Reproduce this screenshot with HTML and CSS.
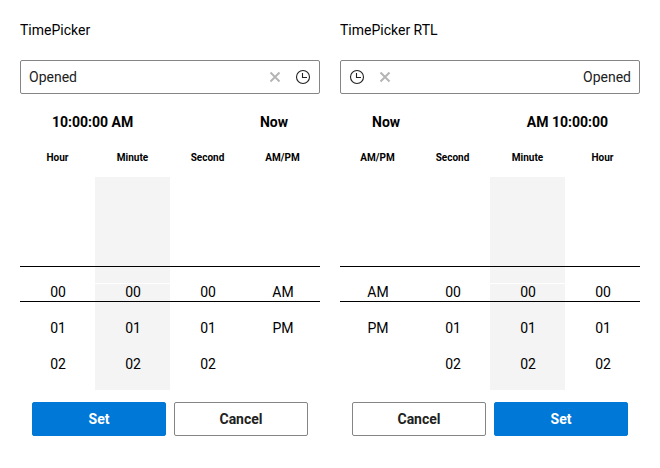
FILE: index.html
```html
<!DOCTYPE html>
<html lang="en">
<head>
<meta charset="utf-8">
<title>TimePicker</title>
<link rel="stylesheet" href="styles.css">
</head>
<body>
<main class="pickers">
  <section class="picker">
    <div class="title">TimePicker</div>
    <div class="field">
      <span class="value">Opened</span>
      <svg class="clear" viewBox="0 0 12 12"><path d="M1.5 1.5l9 9M10.5 1.5l-9 9"/></svg>
      <svg class="clock" viewBox="0 0 16 16"><circle cx="8" cy="8" r="6.5"/><path d="M7.5 4v4.5H12"/></svg>
    </div>
    <div class="summary"><span>10:00:00 AM</span><span>Now</span></div>
    <div class="labels"><span>Hour</span><span>Minute</span><span>Second</span><span>AM/PM</span></div>
    <div class="wheels">
      <div class="wheel"><span>00</span><span>01</span><span>02</span></div>
      <div class="wheel active"><span>00</span><span>01</span><span>02</span></div>
      <div class="wheel"><span>00</span><span>01</span><span>02</span></div>
      <div class="wheel"><span>AM</span><span>PM</span></div>
      <div class="selection"></div>
    </div>
    <div class="actions"><button class="btn primary">Set</button><button class="btn">Cancel</button></div>
  </section>
  <section class="picker">
    <div class="title">TimePicker RTL</div>
    <div dir="rtl">
      <div class="field">
        <span class="value">Opened</span>
        <svg class="clear" viewBox="0 0 12 12"><path d="M1.5 1.5l9 9M10.5 1.5l-9 9"/></svg>
        <svg class="clock" viewBox="0 0 16 16"><circle cx="8" cy="8" r="6.5"/><path d="M7.5 4v4.5H12"/></svg>
      </div>
      <div class="summary"><span>10:00:00 AM</span><span>Now</span></div>
      <div class="labels"><span>Hour</span><span>Minute</span><span>Second</span><span>AM/PM</span></div>
      <div class="wheels">
        <div class="wheel"><span>00</span><span>01</span><span>02</span></div>
        <div class="wheel active"><span>00</span><span>01</span><span>02</span></div>
        <div class="wheel"><span>00</span><span>01</span><span>02</span></div>
        <div class="wheel"><span>AM</span><span>PM</span></div>
        <div class="selection"></div>
      </div>
      <div class="actions"><button class="btn primary">Set</button><button class="btn">Cancel</button></div>
    </div>
  </section>
</main>
</body>
</html>
```
FILE: styles.css
```css
* { box-sizing: border-box; }

body {
  margin: 0;
  background: #fff;
  color: #000;
  font: 14px/20px Roboto, sans-serif;
}

.pickers {
  display: flex;
  gap: 20px;
  padding: 20px;
}

.picker { width: 300px; }

.title { margin-bottom: 20px; }

.field {
  display: flex;
  align-items: center;
  height: 34px;
  padding: 0 8px;
  border: 1px solid #858585;
  border-radius: 2px;
  color: #212121;
}

.value { flex: 1; }

.clear {
  width: 12px;
  height: 12px;
  margin-inline-end: 14px;
  fill: none;
  stroke: #b5b5b5;
  stroke-width: 2;
}

.clock {
  width: 16px;
  height: 16px;
  fill: none;
  stroke: #212121;
  stroke-width: 1.1;
}

.summary {
  display: flex;
  justify-content: space-between;
  padding: 18px 32px 16px;
  font-weight: 700;
}

.labels {
  display: grid;
  grid-template-columns: repeat(4, 1fr);
  height: 29px;
  font-size: 10px;
  font-weight: 700;
  line-height: 19px;
  text-align: center;
}

.wheels {
  position: relative;
  display: grid;
  grid-template-columns: repeat(4, 1fr);
  height: 213px;
}

.wheel {
  display: flex;
  flex-direction: column;
  padding-top: 97px;
  line-height: 36px;
  text-align: center;
}

.wheel span { padding-left: 1px; }

.active {
  background: linear-gradient(#f4f4f4 106px, #fff 106px, #fff 107px, #f4f4f4 107px);
}

.selection {
  position: absolute;
  top: 89px;
  left: 0;
  right: 0;
  height: 36px;
  border: solid #000;
  border-width: 1px 0;
}

.actions {
  display: flex;
  gap: 8px;
  padding: 12px 12px 0;
}

.btn {
  flex: 1;
  height: 34px;
  padding: 0;
  border: 1px solid #858585;
  border-radius: 2px;
  background: #fff;
  color: #212121;
  font: inherit;
  font-weight: 700;
}

.primary {
  border-color: #0078d7;
  background: #0078d7;
  color: #fff;
}
```
